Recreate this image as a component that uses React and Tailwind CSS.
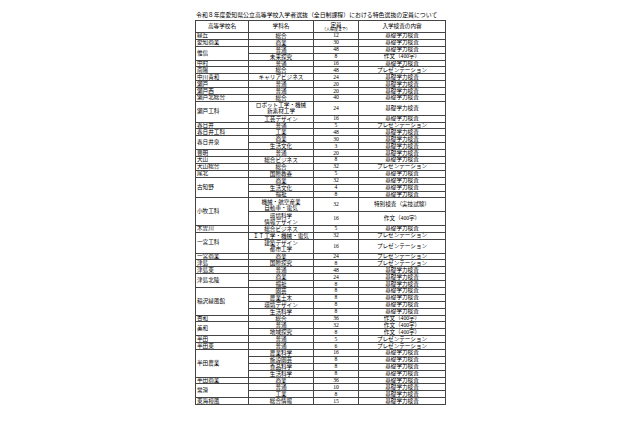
const U = 6.9;

const schools = [
  ['緑丘', [['総合', 12, '基礎学力検査']]],
  ['愛知商業', [['商業', 30, '基礎学力検査']]],
  ['惟信', [['普通', 48, '基礎学力検査'], ['未来探究', 8, '作文（400字）']]],
  ['中村', [['普通', 16, '基礎学力検査']]],
  ['南陽', [['総合', 48, 'プレゼンテーション']]],
  ['中川青和', [['キャリアビジネス', 24, '基礎学力検査']]],
  ['瀬戸', [['普通', 20, '基礎学力検査']]],
  ['瀬戸西', [['普通', 20, '基礎学力検査']]],
  ['瀬戸北総合', [['総合', 40, '基礎学力検査']]],
  ['瀬戸工科', [['ロボット工学・機械\n新素材工学', 24, '基礎学力検査'], ['工芸デザイン', 16, '基礎学力検査']]],
  ['春日井', [['普通', 5, 'プレゼンテーション']]],
  ['春日井工科', [['工業', 48, '基礎学力検査']]],
  ['春日井泉', [['商業', 30, '基礎学力検査'], ['生活文化', 3, '基礎学力検査']]],
  ['豊明', [['普通', 20, '基礎学力検査']]],
  ['犬山', [['総合ビジネス', 8, '基礎学力検査']]],
  ['犬山総合', [['総合', 32, 'プレゼンテーション']]],
  ['尾北', [['国際教養', 5, '基礎学力検査']]],
  ['古知野', [['商業', 32, '基礎学力検査'], ['生活文化', 4, '基礎学力検査'], ['福祉', 8, '基礎学力検査']]],
  ['小牧工科', [['機械・航空産業\n自動車・電気', 32, '特別検査（実技試験）'], ['環境科学\n情報デザイン', 16, '作文（400字）']]],
  ['木曽川', [['総合ビジネス', 5, '基礎学力検査']]],
  ['一宮工科', [['ＩＴ工学・機械・電気', 32, 'プレゼンテーション'], ['建築デザイン\n都市工学', 16, 'プレゼンテーション']]],
  ['一宮商業', [['商業', 24, 'プレゼンテーション']]],
  ['津島', [['国際探究', 8, 'プレゼンテーション']]],
  ['津島東', [['普通', 48, '基礎学力検査']]],
  ['津島北陵', [['商業', 24, '基礎学力検査'], ['福祉', 8, '基礎学力検査']]],
  ['稲沢緑風館', [['園芸', 8, '基礎学力検査'], ['農業土木', 8, '基礎学力検査'], ['環境デザイン', 8, '基礎学力検査'], ['生活科学', 8, '基礎学力検査']]],
  ['杏和', [['総合', 36, '作文（400字）']]],
  ['美和', [['普通', 32, '作文（400字）'], ['地域探究', 8, '作文（400字）']]],
  ['半田', [['普通', 5, 'プレゼンテーション']]],
  ['半田東', [['普通', 6, 'プレゼンテーション']]],
  ['半田農業', [['農業科学', 16, '基礎学力検査'], ['施設園芸', 8, '基礎学力検査'], ['食品科学', 8, '基礎学力検査'], ['生活科学', 8, '基礎学力検査']]],
  ['半田商業', [['商業', 36, '基礎学力検査']]],
  ['常滑', [['普通', 10, '基礎学力検査'], ['工業', 8, '基礎学力検査']]],
  ['東海樟風', [['総合情報', 15, '基礎学力検査']]],
];

const cell = 'border border-[#444] p-0 leading-[5px] overflow-hidden';

export default function App() {
  return (
    <div className="w-[640px] h-[426px] bg-white text-black overflow-hidden" style={{ fontFamily: '"Liberation Serif", "Noto Sans CJK JP", serif' }}>
      <div className="w-[250px] mx-auto pt-[11px]">
        <p className="text-[5.9px] leading-[8px] whitespace-nowrap pl-[1px]">令和８年度愛知県公立高等学校入学者選抜（全日制課程）における特色選抜の定員について</p>
        <table className="w-[250px] table-fixed border-collapse text-[5.6px] mt-[1px]">
          <colgroup>
            <col className="w-[53px]" />
            <col className="w-[65px]" />
            <col className="w-[45px]" />
            <col className="w-[87px]" />
          </colgroup>
          <thead>
            <tr>
              <th className={cell + ' font-normal text-center'}>
                <div className="h-[11px] flex items-center justify-center">高等学校名</div>
              </th>
              <th className={cell + ' font-normal text-center'}>学科名</th>
              <th className={cell + ' font-normal text-center'}>
                <div className="h-[11px] flex flex-col items-center justify-center">
                  <div className="leading-[6px]">定員</div>
                  <div className="text-[4px] leading-[4px]">（人程度まで）</div>
                </div>
              </th>
              <th className={cell + ' font-normal text-center'}>入学検査の内容</th>
            </tr>
          </thead>
          <tbody>
            {schools.map(([name, depts]) =>
              depts.map(([dept, cap, test], i) => {
                const lines = dept.split('\n');
                const h = lines.length * U - 1;
                return (
                  <tr key={name + dept}>
                    {i === 0 && (
                      <td rowSpan={depts.length} className={cell + ' text-left pl-[1px] align-middle whitespace-nowrap'}>{name}</td>
                    )}
                    <td className={cell + ' text-center whitespace-nowrap'}>
                      <div className="flex flex-col items-center justify-center" style={{ height: h }}>
                        {lines.map((l) => <div key={l} className="leading-[6px]">{l}</div>)}
                      </div>
                    </td>
                    <td className={cell + ' text-center'}>{cap}</td>
                    <td className={cell + ' text-center whitespace-nowrap'}>{test}</td>
                  </tr>
                );
              })
            )}
          </tbody>
        </table>
      </div>
    </div>
  );
}
